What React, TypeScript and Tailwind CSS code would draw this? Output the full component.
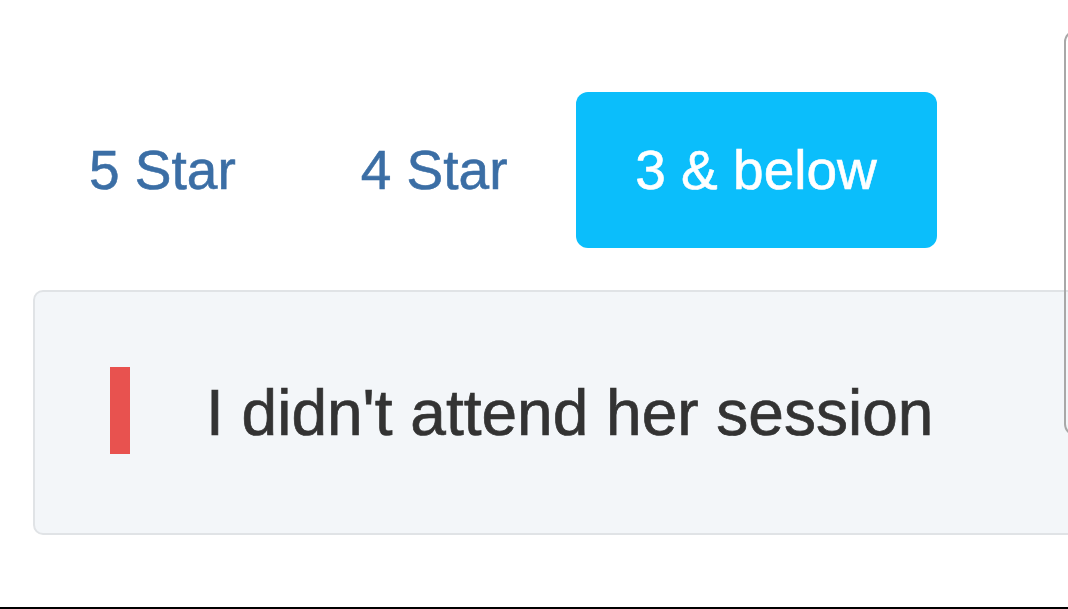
import React from "react";

export default function App() {
  const font = { fontFamily: '"Liberation Sans", Arial, sans-serif' };
  return (
    <div
      className="relative w-[1068px] h-[609px] bg-white overflow-hidden flex flex-col"
      style={font}
    >
      <div className="flex items-center gap-[11px] pl-[32px] pt-[92px]">
        <div className="h-[156px] px-[57px] flex items-center text-[55px] leading-none text-[#3b6ea5] [-webkit-text-stroke:0.6px]">
          5 Star
        </div>
        <div className="h-[156px] px-[57px] flex items-center text-[55px] leading-none text-[#3b6ea5] [-webkit-text-stroke:0.6px]">
          4 Star
        </div>
        <div className="h-[156px] w-[361px] rounded-[12px] bg-[#0bbefb] flex items-center justify-center text-[55px] leading-none text-white [-webkit-text-stroke:0.6px]">
          3 &amp; below
        </div>
      </div>

      <div className="mt-[42px] ml-[33px] w-[1100px] h-[245px] shrink-0 rounded-[10px] border-2 border-[#e0e3e6] bg-[#f3f6f9] flex items-center pl-[75px]">
        <div className="w-[20px] h-[87px] bg-[#e8524f] -mt-[4px]" />
        <div className="ml-[76px] text-[64px] leading-none text-[#333333] [-webkit-text-stroke:0.7px]">
          I didn't attend her session
        </div>
      </div>

      <div className="absolute left-[1064px] top-[30px] w-[40px] h-[406px] rounded-[12px] border-2 border-[#a8a8a8]" />

      <div className="absolute left-0 right-0 bottom-0 h-[2px] bg-black" />
    </div>
  );
}
